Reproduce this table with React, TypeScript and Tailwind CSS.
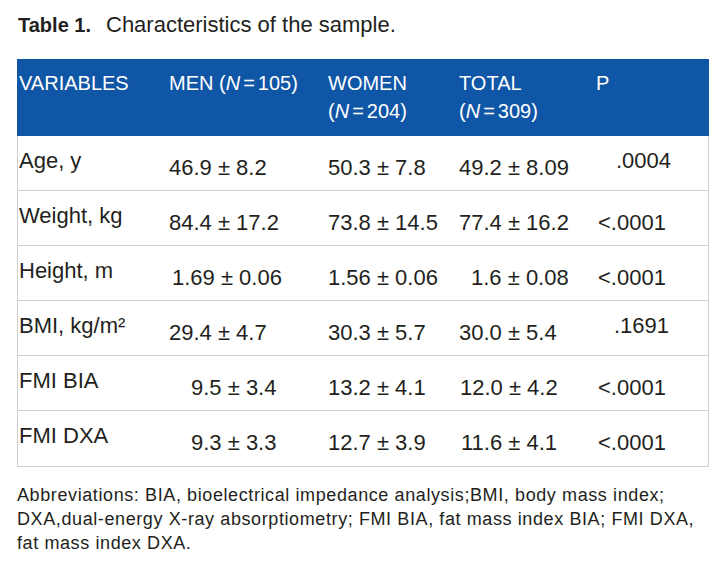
const rows = [
  { label: "Age, y", men: "46.9 ± 8.2", menPad: "pl-0", women: "50.3 ± 7.8", total: "49.2 ± 8.09", totalPad: "pl-0", p: ".0004", pDot: true, pPad: "pl-[18px]" },
  { label: "Weight, kg", men: "84.4 ± 17.2", menPad: "pl-0", women: "73.8 ± 14.5", total: "77.4 ± 16.2", totalPad: "pl-0", p: "<.0001", pDot: false, pPad: "pl-0" },
  { label: "Height, m", men: "1.69 ± 0.06", menPad: "pl-[3px]", women: "1.56 ± 0.06", total: "1.6 ± 0.08", totalPad: "pl-[12px]", p: "<.0001", pDot: false, pPad: "pl-0" },
  { label: "BMI, kg/m²", men: "29.4 ± 4.7", menPad: "pl-0", women: "30.3 ± 5.7", total: "30.0 ± 5.4", totalPad: "pl-0", p: ".1691", pDot: true, pPad: "pl-[16px]" },
  { label: "FMI BIA", men: "9.5 ± 3.4", menPad: "pl-[22px]", women: "13.2 ± 4.1", total: "12.0 ± 4.2", totalPad: "pl-[1px]", p: "<.0001", pDot: false, pPad: "pl-0" },
  { label: "FMI DXA", men: "9.3 ± 3.3", menPad: "pl-[22px]", women: "12.7 ± 3.9", total: "11.6 ± 4.1", totalPad: "pl-[2px]", p: "<.0001", pDot: false, pPad: "pl-0" },
];

const cols = "grid grid-cols-[150px_159px_131px_139px_1fr]";

function N({ n }: { n: string }) {
  return (
    <>
      (<i>N</i>
      <span className="mx-[3px]">=</span>
      {n})
    </>
  );
}

export default function App() {
  return (
    <div
      className="h-[566px] w-[726px] bg-white text-[#231f20]"
      style={{ fontFamily: '"Liberation Sans", Arial, sans-serif' }}
    >
      <div className="flex h-[59px] items-baseline pl-[18px] pt-[14px] leading-none">
        <span className="text-[20px] font-bold">Table 1.</span>
        <span className="ml-[15px] text-[22px]">Characteristics of the sample.</span>
      </div>

      <div className="ml-[17px] w-[692px] border-x border-b border-[#cfcfcf]">
        <div className={`${cols} -mx-px bg-[#1056a6] pl-[2px] pb-[11px] pt-[10px] text-[20px] leading-[28px] text-white`}>
          <div>VARIABLES</div>
          <div>
            MEN <N n="105" />
          </div>
          <div>
            WOMEN
            <br />
            <N n="204" />
          </div>
          <div>
            TOTAL
            <br />
            <N n="309" />
          </div>
          <div className="-ml-[2px]">P</div>
        </div>

        {rows.map((r, i) => (
          <div
            key={r.label}
            className={`${cols} h-[55px] pl-[1px] text-[22px] leading-[28px] ${i < rows.length - 1 ? "border-b border-[#cfcfcf]" : "h-[54px]"}`}
          >
            <div className="pt-[11px]">{r.label}</div>
            <div className={`pt-[18px] whitespace-nowrap ${r.menPad}`}>{r.men}</div>
            <div className="pt-[18px] whitespace-nowrap">{r.women}</div>
            <div className={`pt-[18px] whitespace-nowrap ${r.totalPad}`}>{r.total}</div>
            <div className={`whitespace-nowrap ${r.pDot ? "pt-[11px]" : "pt-[18px]"} ${r.pPad}`}>{r.p}</div>
          </div>
        ))}
      </div>

      <p className="ml-[17px] mt-[16px] whitespace-nowrap text-[18px] leading-[24px] tracking-[0.6px]">
        Abbreviations: BIA, bioelectrical impedance analysis;BMI, body mass index;
        <br />
        DXA,dual-energy X-ray absorptiometry; FMI BIA, fat mass index BIA; FMI DXA,
        <br />
        fat mass index DXA.
      </p>
    </div>
  );
}
